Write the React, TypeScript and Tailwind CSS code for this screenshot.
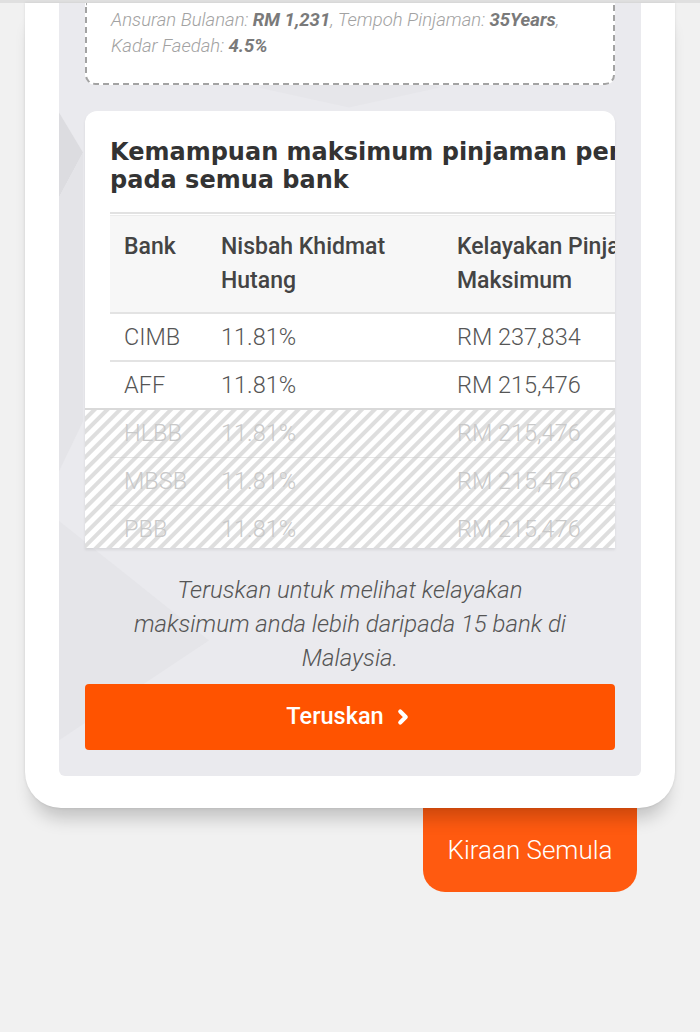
import { ChevronRight } from 'lucide-react';

type BankRow = {
  bank: string;
  ratio: string;
  amount: string;
};

const visibleRows: BankRow[] = [
  { bank: 'CIMB', ratio: '11.81%', amount: 'RM 237,834' },
  { bank: 'AFF', ratio: '11.81%', amount: 'RM 215,476' },
];

const lockedRows: BankRow[] = [
  { bank: 'HLBB', ratio: '11.81%', amount: 'RM 215,476' },
  { bank: 'MBSB', ratio: '11.81%', amount: 'RM 215,476' },
  { bank: 'PBB', ratio: '11.81%', amount: 'RM 215,476' },
];

function PanelPattern() {
  return (
    <svg
      className="pointer-events-none absolute inset-0 h-full w-full"
      viewBox="0 0 582 776"
      preserveAspectRatio="none"
      aria-hidden
    >
      <polygon points="0,110 24,150 0,195" fill="#dcdce0" />
      <polygon points="0,195 24,150 24,420 0,470" fill="#e4e4e8" />
      <polygon points="0,520 150,640 0,740" fill="#e5e5e9" />
      <polygon points="200,85 290,40 380,85 290,105" fill="#e6e6ea" />
    </svg>
  );
}

function SummaryBox() {
  return (
    <div className="relative h-[82px] rounded-b-[10px] border-2 border-t-0 border-dashed border-[#a3a3a3] bg-white px-[24px] pt-[4px] text-[18.5px] font-light italic leading-[26px] text-[#a2a2a2]">
      Ansuran Bulanan: <b className="font-bold text-[#7a7a7a]">RM 1,231</b>, Tempoh Pinjaman:{' '}
      <b className="font-bold text-[#7a7a7a]">35Years</b>,
      <br />
      Kadar Faedah: <b className="font-bold text-[#7a7a7a]">4.5%</b>
    </div>
  );
}

function Row({ row, faded }: { row: BankRow; faded?: boolean }) {
  return (
    <div
      className={
        faded
          ? 'grid h-[48px] grid-cols-[97px_236px_227px] border-b border-[#e6e6e6] text-[23.5px] font-light leading-[47px] text-[#c9c9c9]'
          : 'grid h-[48px] grid-cols-[97px_236px_227px] border-b-2 border-[#e3e3e3] text-[23.5px] font-light leading-[46px] text-[#555]'
      }
    >
      <span className="px-[14px]">{row.bank}</span>
      <span className="px-[14px]">{row.ratio}</span>
      <span className="whitespace-nowrap px-[14px]">{row.amount}</span>
    </div>
  );
}

function LoanTable() {
  return (
    <div className="relative mt-[26px] h-[437px] overflow-hidden rounded-t-[12px] bg-white shadow-[0_2px_3px_rgba(0,0,0,0.08)]">
      <h2 className="whitespace-nowrap pl-[25px] pt-[27px] font-['DejaVu_Sans',sans-serif] text-[24px] font-bold leading-[28px] text-[#333]">
        Kemampuan maksimum pinjaman peribadi
        <br />
        pada semua bank
      </h2>
      <div className="ml-[25px] mt-[18px] w-[560px] border-t-2 border-[#e2e2e2] pt-px">
        <div className="grid grid-cols-[97px_236px_227px] border-y-2 border-t border-[#e3e3e3] border-t-[#ececec] bg-[#f7f7f7] py-[14px] text-[23px] font-medium leading-[34px] text-[#444]">
          <span className="px-[14px]">Bank</span>
          <span className="px-[14px]">
            Nisbah Khidmat
            <br />
            Hutang
          </span>
          <span className="whitespace-nowrap px-[14px]">
            Kelayakan Pinjaman
            <br />
            Maksimum
          </span>
        </div>
        {visibleRows.map((row) => (
          <Row key={row.bank} row={row} />
        ))}
      </div>
      <div className="relative -mt-[2px] border-t-2 border-[#d9d9d9] pl-[25px]">
        <div className="w-[560px]">
          {lockedRows.map((row) => (
            <Row key={row.bank} row={row} faded />
          ))}
        </div>
        <div className="absolute inset-0 bg-[image:repeating-linear-gradient(135deg,rgba(255,255,255,0)_0px,rgba(255,255,255,0)_4px,rgba(200,200,200,0.6)_5px,rgba(200,200,200,0.6)_8px,rgba(255,255,255,0)_9px)] bg-[length:100%_100%]" />
      </div>
    </div>
  );
}

export default function App() {
  return (
    <div className="min-h-[1032px] border-t-[3px] border-[#e0e0e0] bg-[#f1f1f1] font-['Roboto',sans-serif]">
      <div className="relative z-10 mx-[25px] rounded-b-[36px] bg-white px-[34px] pb-[32px] shadow-[0_18px_18px_-8px_rgba(0,0,0,0.2),0_0_3px_rgba(0,0,0,0.1)]">
        <div className="relative rounded-b-[6px] bg-[#eaeaee] px-[26px] pb-[26px]">
          <PanelPattern />
          <div className="relative">
            <SummaryBox />
            <LoanTable />
            <p className="mt-[25px] text-center text-[24px] font-light italic leading-[34px] text-[#555]">
              Teruskan untuk melihat kelayakan
              <br />
              maksimum anda lebih daripada 15 bank di
              <br />
              Malaysia.
            </p>
            <button
              type="button"
              className="mt-[9px] flex h-[66px] w-full items-center justify-center gap-[8px] rounded-[4px] bg-[#ff5300] text-[23.5px] font-medium text-white"
            >
              Teruskan
              <ChevronRight size={22} strokeWidth={4.5} />
            </button>
          </div>
        </div>
      </div>
      <div className="flex justify-end pr-[63px]">
        <button
          type="button"
          className="h-[84px] w-[214px] rounded-b-[22px] bg-[#ff5a10] text-[26px] font-light text-white"
        >
          Kiraan Semula
        </button>
      </div>
    </div>
  );
}
